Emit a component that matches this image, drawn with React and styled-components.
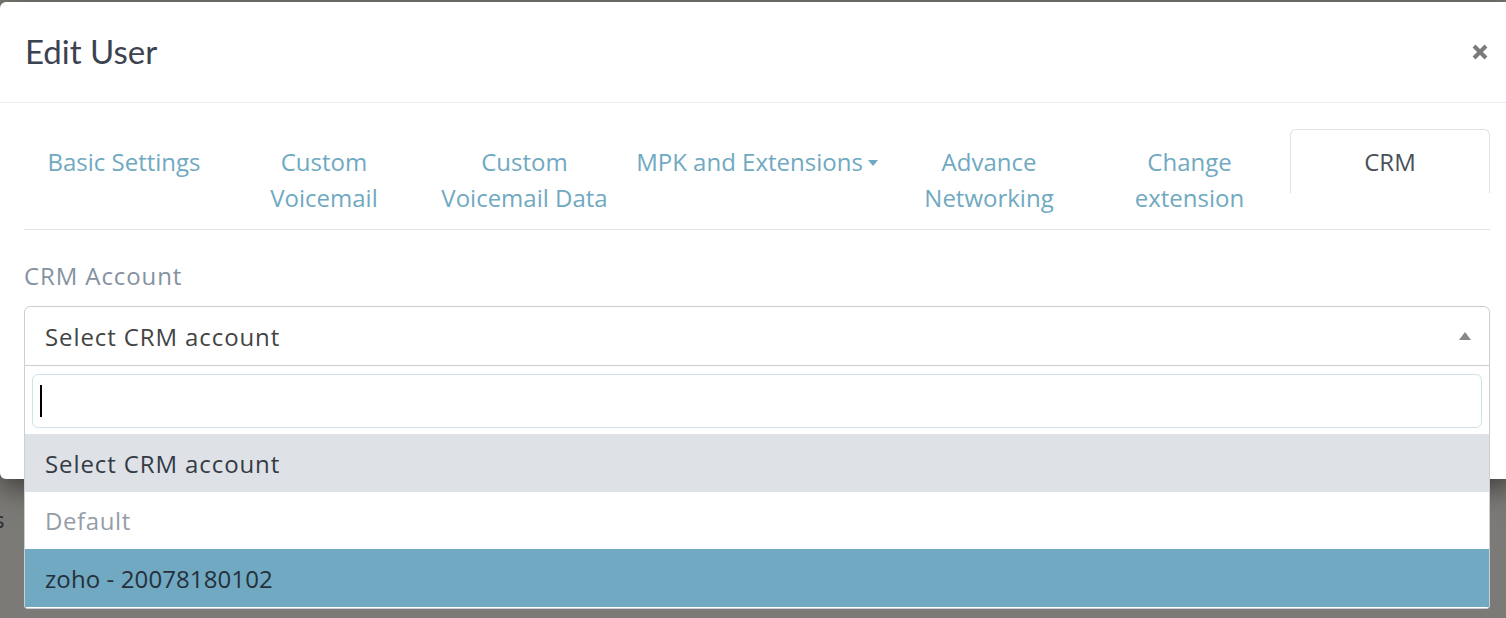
import React from 'react';
import styled, { createGlobalStyle } from 'styled-components';

const GlobalStyle = createGlobalStyle`
    html, body {
        margin: 0;
        height: 100%;
        overflow: hidden;
        background: #7c7a76;
    }
    body {
        font-family: "Open Sans", "Noto Sans", sans-serif;
        font-size: 24px;
    }
`;

const Page = styled.div`
    height: 100vh;
    display: flex;
    flex-direction: column;
`;

const Modal = styled.div`
    flex: none;
    width: 1514px;
    height: 477px;
    margin-top: 2px;
    background: #fff;
    border-radius: 6px;
    box-shadow: 0 8px 30px rgba(0, 0, 0, 0.55);
    position: relative;
    z-index: 1;
`;

const Header = styled.header`
    height: 101px;
    box-sizing: border-box;
    display: flex;
    align-items: center;
    justify-content: space-between;
    padding: 0 26px 3px 25px;
    border-bottom: 1px solid #e9ecef;
`;

const Title = styled.h4`
    margin: 0;
    font-family: Lato, "Open Sans", sans-serif;
    font-weight: 400;
    font-size: 33px;
    color: #3c4350;
`;

const Close = styled.button`
    border: 0;
    background: none;
    padding: 0;
    margin-top: 3px;
    width: 16px;
    height: 16px;
    display: flex;
    cursor: pointer;
`;

const Body = styled.div`
    padding: 26px 24px 0;
`;

const Nav = styled.ul`
    display: flex;
    align-items: flex-start;
    list-style: none;
    margin: 0;
    padding: 0;
    border-bottom: 1px solid #dee2e6;
`;

const Tab = styled.li`
    flex: none;
    width: ${p => p.$width || 200}px;
    box-sizing: border-box;
    padding: 14px 4px 13px;
    text-align: center;
    font-size: 24px;
    line-height: 36px;
    white-space: nowrap;
    color: ${p => (p.$active ? '#495057' : '#70a9c1')};
    border: 1px solid ${p => (p.$active ? '#dee2e6' : 'transparent')};
    border-bottom: none;
    border-radius: 6px 6px 0 0;
    cursor: pointer;
`;

const Caret = styled.span`
    display: inline-block;
    margin-left: 5px;
    vertical-align: 5px;
    border-top: 6px solid #70a9c1;
    border-left: 5px solid transparent;
    border-right: 5px solid transparent;
`;

const Label = styled.label`
    display: block;
    margin: 29px 0 14px;
    line-height: 33px;
    letter-spacing: 0.9px;
    color: #8592a0;
`;

const SelectWrap = styled.div`
    position: relative;
`;

const SelectBox = styled.div`
    height: 60px;
    box-sizing: border-box;
    display: flex;
    align-items: center;
    justify-content: space-between;
    padding: 0 18px 0 20px;
    border: 1px solid #cbced3;
    border-radius: 6px 6px 0 0;
    letter-spacing: 0.9px;
    color: #444;
`;

const ArrowUp = styled.span`
    border-bottom: 8px solid #888;
    border-left: 6.5px solid transparent;
    border-right: 6.5px solid transparent;
`;

const Dropdown = styled.div`
    position: absolute;
    top: 100%;
    left: 0;
    right: 0;
    background: #fff;
    border: 1px solid #cbced3;
    border-top: none;
    border-radius: 0 0 4px 4px;
    padding-bottom: 1px;
    z-index: 5;
`;

const Search = styled.div`
    height: 54px;
    box-sizing: border-box;
    margin: 8px 7px 6px;
    padding-left: 7px;
    display: flex;
    align-items: center;
    border: 1px solid #cfe1e9;
    border-radius: 6px;
`;

const Cursor = styled.span`
    width: 2px;
    height: 32px;
    background: #000;
`;

const Option = styled.div`
    height: ${p => p.$h || 58}px;
    display: flex;
    align-items: center;
    padding-left: 20px;
    letter-spacing: ${p => p.$ls ?? 0.9}px;
    background: ${p => p.$bg || '#fff'};
    color: ${p => p.$color || '#333b45'};
`;

const Behind = styled.div`
    padding-top: 24px;
    margin-left: -6px;
    font-size: 22px;
    line-height: 33px;
    color: #2e2e2e;
`;

function App() {
    return (
    <>
        <GlobalStyle />
        <Page>
            <Modal>
                <Header>
                    <Title>Edit User</Title>
                    <Close aria-label='close'>
                        <svg width='16' height='16' viewBox='0 0 16 16'>
                            <path d='M2 2L14 14M14 2L2 14' stroke='#7b7b7b' strokeWidth='4' />
                        </svg>
                    </Close>
                </Header>
                <Body>
                    <Nav>
                        <Tab>Basic Settings</Tab>
                        <Tab>Custom<br />Voicemail</Tab>
                        <Tab $width={201}>Custom<br />Voicemail Data</Tab>
                        <Tab $width={264}>MPK and Extensions<Caret /></Tab>
                        <Tab>Advance<br />Networking</Tab>
                        <Tab $width={201}>Change<br />extension</Tab>
                        <Tab $active>CRM</Tab>
                    </Nav>
                    <Label>CRM Account</Label>
                    <SelectWrap>
                        <SelectBox>
                            <span>Select CRM account</span>
                            <ArrowUp />
                        </SelectBox>
                        <Dropdown>
                            <Search><Cursor /></Search>
                            <Option $bg='#dee1e6'>Select CRM account</Option>
                            <Option $h={57} $color='#959da7' $ls={0.6}>Default</Option>
                            <Option $bg='#70a9c1' $color='#26303b' $ls={0.1}>zoho - 20078180102</Option>
                        </Dropdown>
                    </SelectWrap>
                </Body>
            </Modal>
            <Behind>s</Behind>
        </Page>
    </>
    );
}

export default App;
